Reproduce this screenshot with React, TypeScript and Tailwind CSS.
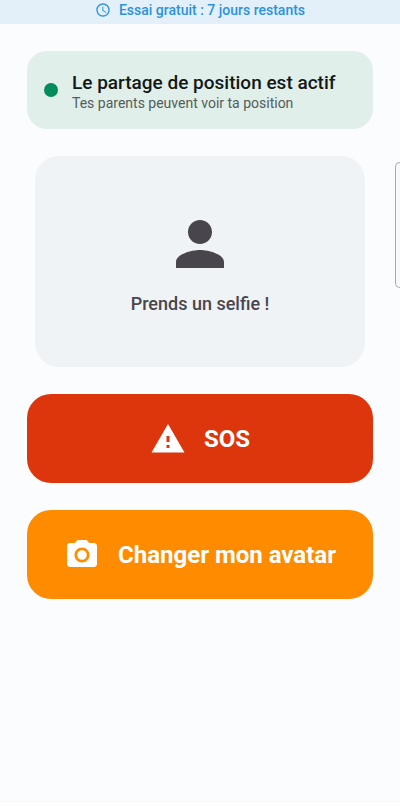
import { MdAccessTime, MdCameraAlt, MdPerson, MdWarning } from "react-icons/md";

function TrialBanner() {
  return (
    <header className="flex h-6 items-center justify-center gap-2 bg-[#e3eff9] pb-1 text-[#2b93dc]">
      <MdAccessTime size={16} aria-hidden="true" />
      <p className="text-sm leading-5 font-medium">Essai gratuit : 7 jours restants</p>
    </header>
  );
}

function SharingStatus() {
  return (
    <section className="flex items-center gap-3.5 rounded-[20px] bg-[#e0efe9] px-[17px] py-[18px]" role="status">
      <span className="size-3.5 shrink-0 rounded-full bg-[#058c5c]" />
      <div className="pt-0.5">
        <h1 className="text-[19px] leading-6 font-medium text-[#121817]">Le partage de position est actif</h1>
        <p className="text-sm leading-4 text-[#535d5a]">Tes parents peuvent voir ta position</p>
      </div>
    </section>
  );
}

function SelfieCard() {
  return (
    <button
      type="button"
      className="mx-2 flex h-[211px] flex-col items-center justify-center gap-3 rounded-3xl bg-[#eff3f6] text-[#48464c]"
    >
      <MdPerson size={72} aria-hidden="true" />
      <span className="text-lg leading-6 font-medium">Prends un selfie !</span>
    </button>
  );
}

export default function App() {
  return (
    <div className="flex min-h-screen flex-col bg-[#fbfcfe] font-['Roboto',sans-serif]">
      <TrialBanner />
      <main className="relative flex grow flex-col gap-[27px] px-[27px] pt-[27px]">
        <SharingStatus />
        <SelfieCard />
        <button
          type="button"
          className="flex h-[89px] items-center justify-center gap-[18px] rounded-3xl bg-[#dd360d] text-2xl font-bold text-white"
        >
          <MdWarning size={36} aria-hidden="true" />
          SOS
        </button>
        <button
          type="button"
          className="flex h-[89px] items-center justify-center gap-[18px] rounded-3xl bg-[#ff8c00] text-2xl font-bold text-white"
        >
          <MdCameraAlt size={36} aria-hidden="true" />
          Changer mon avatar
        </button>
        <span className="absolute top-[138px] right-0 h-[126px] w-[5px] rounded-l-md border border-r-0 border-[#a9abac] bg-[#f8f9f9]" />
      </main>
      <div className="h-[6px] border-t border-[#f7f8f9] bg-[#fdfdfe]" />
    </div>
  );
}
